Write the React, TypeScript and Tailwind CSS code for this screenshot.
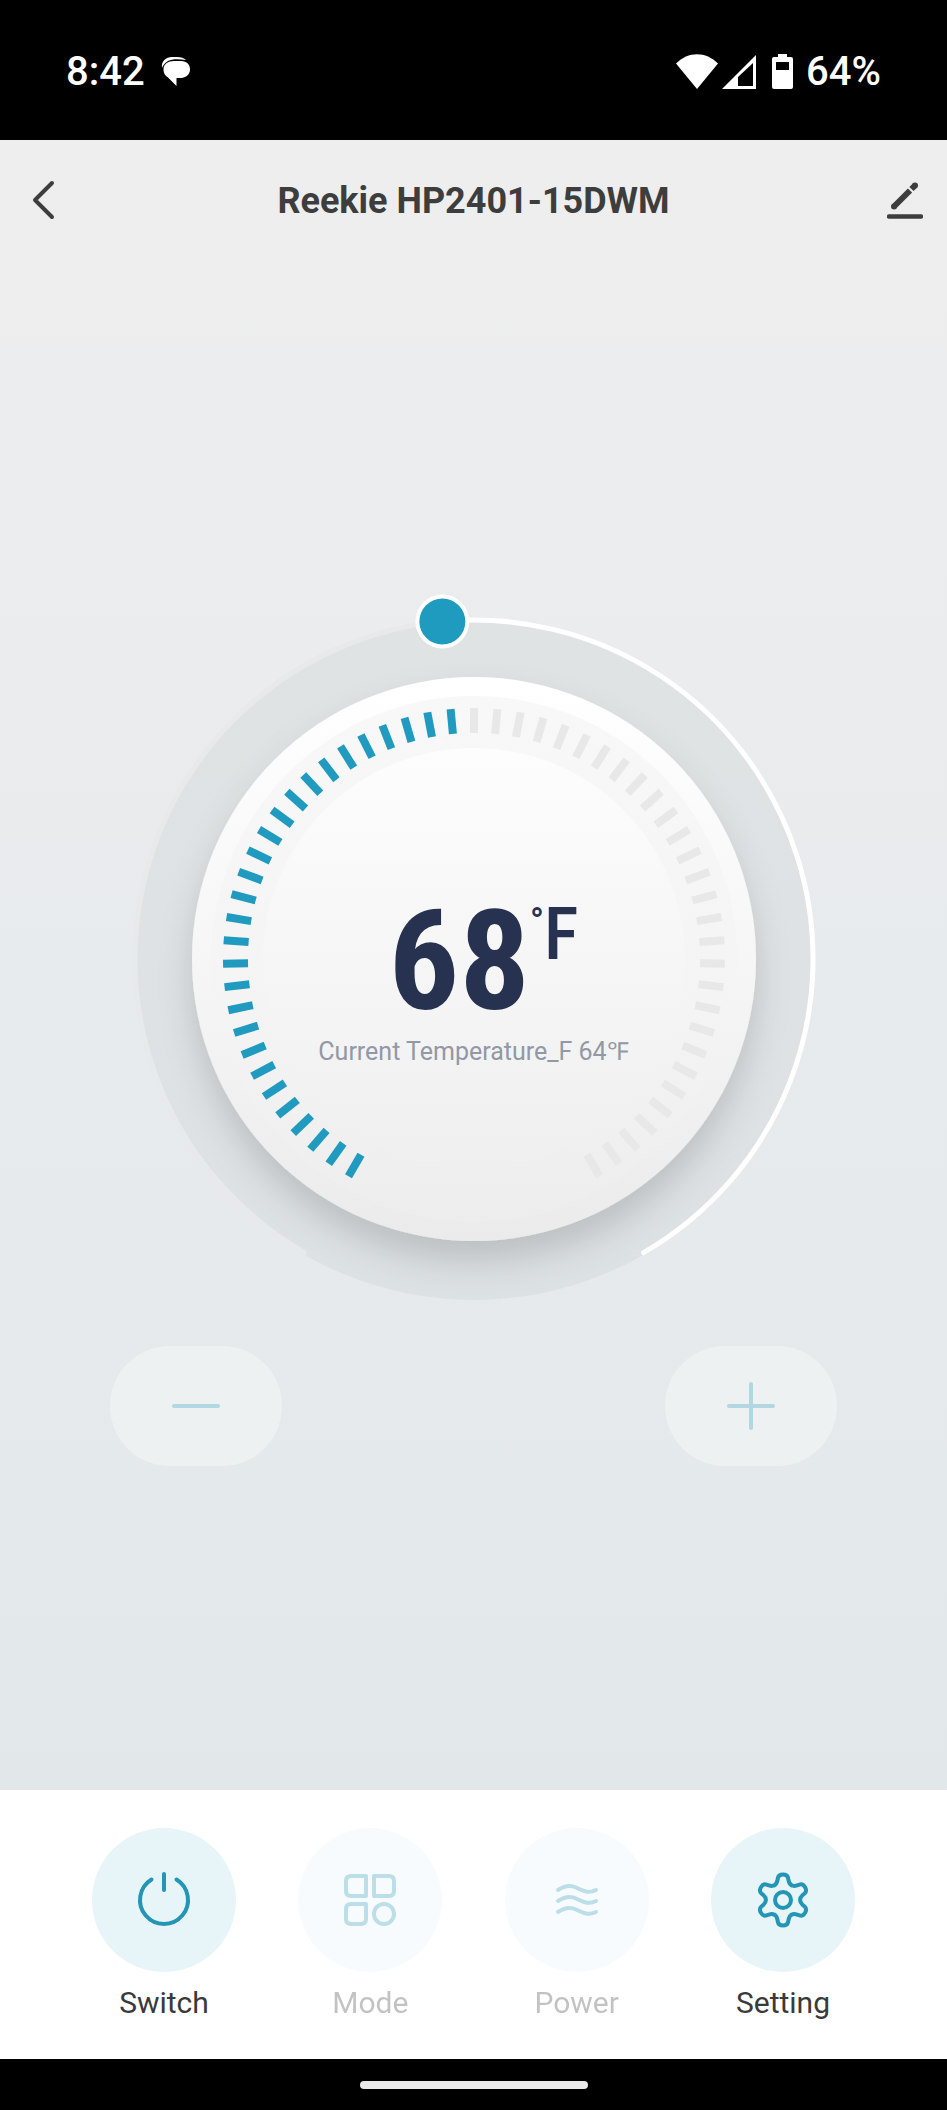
import React, { useState } from 'react';

const MIN_TEMP = 41;
const MAX_TEMP = 97;
const TICK_STEP = 300 / (MAX_TEMP - MIN_TEMP);

const ticks = Array.from({ length: MAX_TEMP - MIN_TEMP + 1 }, (_, i) => i);

// point on a circle around 0,0 - angle is clockwise from the top
const polar = (radius: number, angle: number) => {
  const rad = (angle * Math.PI) / 180;
  return [radius * Math.sin(rad), -radius * Math.cos(rad)];
};

const arc = (radius: number, from: number, to: number) => {
  const [x1, y1] = polar(radius, from);
  const [x2, y2] = polar(radius, to);
  const large = to - from > 180 ? 1 : 0;
  return `M${x1} ${y1}A${radius} ${radius} 0 ${large} 1 ${x2} ${y2}`;
};

// one tooth of the gear, the other five are the same points turned by 60 degrees
const tooth = [
  [-8.8, -14.6], [-6.3, -16], [-5.6, -19.5],
  [-5.1, -22], [-4.4, -25.5], [0, -25.5],
  [4.4, -25.5], [5.1, -22],
  [5.6, -19.5], [6.3, -16], [8.8, -14.6],
];

const gearPath = () => {
  let d = '';
  for (let i = 0; i < 6; i++) {
    const a = (i * Math.PI) / 3;
    const p = tooth.map(([x, y]) => `${x * Math.cos(a) - y * Math.sin(a)} ${x * Math.sin(a) + y * Math.cos(a)}`);
    d += `${i === 0 ? 'M' : 'L'}${p[0]}Q${p[1]} ${p[2]}L${p[3]}Q${p[4]} ${p[5]}Q${p[6]} ${p[7]}L${p[8]}Q${p[9]} ${p[10]}`;
  }
  return d + 'Z';
};

function StatusBar() {
  return (
    <div className="flex h-[140px] items-center justify-between bg-black px-[66px] pt-1 text-[40px] font-medium leading-[48px] text-white">
      <div className="flex items-center gap-4">
        <span>8:42</span>
        <svg width="30" height="30" viewBox="0 0 30 30" fill="#fff">
          <path d="M1 11C0 4 5 0 11 0h5c4 0 7 1 9 3-8-1-14-1-18 1C4 6 2 8 1 11Z" />
          <path d="M13 4h7c6 0 9 4 9 8.500s-4 8.500-9 8.500h-4.500v8L7 20.500C4 19 2.500 16 2.500 12.500 2.500 7 7 4 13 4Z" />
        </svg>
      </div>
      <div className="flex items-center gap-3">
        <svg width="118" height="36" viewBox="0 0 118 36" fill="#fff">
          <path d="M0 9.500C12-3 30-3 42 9.500L21 35Z" />
          <path fillRule="evenodd" d="M80 1v34H46L80 1ZM77 9 62 23v9h15V9Z" />
          <path fillRule="evenodd" d="M102 0h9v3h4q2 0 2 2v28q0 2-2 2H98q-2 0-2-2V5q0-2 2-2h4V0ZM100 8v8h13V8h-13Z" />
        </svg>
        <span>64%</span>
      </div>
    </div>
  );
}

function Header() {
  return (
    <header className="flex h-[122px] items-center justify-between px-6">
      <button type="button" aria-label="Back">
        <svg width="36" height="44" viewBox="0 0 36 44" fill="none" stroke="#3d3d3d" strokeWidth="4" strokeLinecap="round" strokeLinejoin="round">
          <path d="M28 4 11 21l17 17" />
        </svg>
      </button>
      <h1 className="text-4xl font-bold text-[#3d3d3d]">Reekie HP2401-15DWM</h1>
      <button type="button" aria-label="Edit">
        <svg width="36" height="44" viewBox="0 0 36 44" fill="none" stroke="#3d3d3d" strokeWidth="6">
          <path d="M2 37.500h32" strokeWidth="4.500" strokeLinecap="round" />
          <path d="M7 27.500 23 11.500" />
          <circle cx="7" cy="27.500" r="3" fill="#3d3d3d" stroke="none" />
          <path d="M24.500 10 28 6.500" />
          <circle cx="28" cy="6.500" r="3" fill="#3d3d3d" stroke="none" />
        </svg>
      </button>
    </header>
  );
}

function Dial({ temp }: { temp: number }) {
  const angle = -150 + (temp - MIN_TEMP) * TICK_STEP;
  const [thumbX, thumbY] = polar(339, angle);

  return (
    <svg className="col-start-1 row-start-1 w-[720px] overflow-visible" viewBox="-360 -360 720 720" fill="none">
      <defs>
        <linearGradient id="face" x1="0" y1="0" x2="0" y2="1">
          <stop offset="0" stopColor="#ffffff" />
          <stop offset="0.5" stopColor="#f6f6f6" />
          <stop offset="1" stopColor="#ebebeb" />
        </linearGradient>
        <linearGradient id="band" x1="0" y1="0" x2="0" y2="1">
          <stop offset="0" stopColor="#f8f8f8" />
          <stop offset="0.6" stopColor="#f4f4f4" />
          <stop offset="1" stopColor="#ededed" />
        </linearGradient>
        <linearGradient id="center" x1="0" y1="0" x2="0" y2="1">
          <stop offset="0" stopColor="#fdfdfd" />
          <stop offset="1" stopColor="#efefef" />
        </linearGradient>
        <linearGradient id="disc" x1="0" y1="0" x2="0" y2="1">
          <stop offset="0" stopColor="#e0e3e4" />
          <stop offset="1" stopColor="#dce1e3" />
        </linearGradient>
        <filter id="shadow" x="-20%" y="-20%" width="140%" height="150%">
          <feDropShadow dx="0" dy="20" stdDeviation="17" floodColor="#000000" floodOpacity="0.15" />
        </filter>
      </defs>

      <circle r="341" fill="url(#disc)" />
      <path d={arc(339, -150, angle)} stroke="#e7e9ea" strokeWidth="5" strokeLinecap="round" />
      <path d={arc(339, angle, 150)} stroke="#ffffff" strokeWidth="5" strokeLinecap="round" />

      <circle r="282" fill="url(#face)" filter="url(#shadow)" />
      <circle r="263" fill="url(#band)" />
      <circle r="211" fill="url(#center)" />

      {ticks.map((i) => (
        <rect
          key={i}
          x="-4"
          y="-251"
          width="8"
          height="25"
          transform={`rotate(${-150 + i * TICK_STEP})`}
          fill={i <= temp - MIN_TEMP ? '#209bbf' : '#e8e8e8'}
        />
      ))}

      <circle cx={thumbX} cy={thumbY} r="27" fill="#ffffff" />
      <circle cx={thumbX} cy={thumbY} r="23" fill="#1f9bc0" />
    </svg>
  );
}

interface NavButtonProps {
  label: string;
  disabled?: boolean;
  children: React.ReactNode;
}

function NavButton({ label, disabled, children }: NavButtonProps) {
  return (
    <button type="button" disabled={disabled} className="flex w-36 flex-col items-center gap-[13px] text-[#3a3a3a] disabled:opacity-30">
      <span className="flex size-36 items-center justify-center rounded-full bg-[#e7f5f9]">
        <svg width="60" height="60" viewBox="-30 -30 60 60" fill="none" stroke="#2595b5" strokeWidth="4" strokeLinecap="round" strokeLinejoin="round">
          {children}
        </svg>
      </span>
      <span className="text-3xl leading-9">{label}</span>
    </button>
  );
}

export default function App() {
  const [temp, setTemp] = useState(68);
  const locked = true;

  return (
    <div className="flex min-h-screen flex-col bg-black font-['Roboto',sans-serif]">
      <StatusBar />

      <main className="flex flex-1 flex-col bg-linear-to-b from-[#eeeeee] via-[#e8ebed] to-[#e2e8ea]">
        <Header />

        <section className="flex flex-1 flex-col justify-center gap-[27px] pt-3">
          <div className="grid place-items-center">
            <Dial temp={temp} />
            <div className="col-start-1 row-start-1 flex flex-col items-center gap-5 pt-[60px]">
              <div className="flex items-start pl-5 font-['Roboto_Condensed','Roboto',sans-serif] text-[#273250]">
                <span className="text-[140px] font-bold leading-[106px]">{temp}</span>
                <span className="text-4xl font-bold leading-[28px]">°</span>
                <span className="text-[72px] font-medium leading-[53px]">F</span>
              </div>
              <p className="text-[25px] leading-9 text-[#9298a5]">Current Temperature_F 64℉</p>
            </div>
            <input
              type="range"
              aria-label="Target temperature"
              className="sr-only"
              min={MIN_TEMP}
              max={MAX_TEMP}
              value={temp}
              onChange={(e) => setTemp(Number(e.target.value))}
            />
          </div>

          <div className="flex justify-between px-[110px]">
            <button
              type="button"
              aria-label="Decrease"
              disabled={locked}
              onClick={() => setTemp(Math.max(MIN_TEMP, temp - 1))}
              className="flex h-[120px] w-[172px] items-center justify-center rounded-[60px] bg-[#edf1f1]"
            >
              <svg width="52" height="52" viewBox="0 0 52 52" stroke="#b2d7e2" strokeWidth="4" strokeLinecap="round">
                <path d="M4 26h44" />
              </svg>
            </button>
            <button
              type="button"
              aria-label="Increase"
              disabled={locked}
              onClick={() => setTemp(Math.min(MAX_TEMP, temp + 1))}
              className="flex h-[120px] w-[172px] items-center justify-center rounded-[60px] bg-[#edf1f1]"
            >
              <svg width="52" height="52" viewBox="0 0 52 52" stroke="#b2d7e2" strokeWidth="4" strokeLinecap="round">
                <path d="M4 26h44M26 4v44" />
              </svg>
            </button>
          </div>
        </section>
      </main>

      <nav className="flex justify-between bg-white px-[92px] pt-[38px] pb-[38px]">
        <NavButton label="Switch">
          <path d="M-12.500 -20.500A24 24 0 1 0 12.500 -20.500" />
          <path d="M0 -26V-10" />
        </NavButton>
        <NavButton label="Mode" disabled>
          <path d="M-19 -24H-4V-4H-19Q-24 -4 -24 -9V-19Q-24 -24 -19 -24Z" />
          <path d="M4 -24H19Q24 -24 24 -19V-9Q24 -4 19 -4H4Z" />
          <path d="M-19 4H-4V19Q-4 24 -9 24H-19Q-24 24 -24 19V9Q-24 4 -19 4Z" />
          <circle cx="14" cy="14" r="10" />
        </NavButton>
        <NavButton label="Power" disabled>
          <path d="M-19 -10C-13 -14 -7 -15.500 -1 -12.500S11 -6 19 -10" />
          <path d="M-19 1C-13 -3 -7 -4.500 -1 -1.500S11 5 19 1" />
          <path d="M-19 12C-13 8 -7 6.500 -1 9.500S11 16 19 12" />
        </NavButton>
        <NavButton label="Setting">
          <path d={gearPath()} />
          <circle r="8" />
        </NavButton>
      </nav>

      <div className="flex h-[51px] items-center justify-center">
        <div className="h-2 w-[228px] rounded-full bg-[#ebebeb]" />
      </div>
    </div>
  );
}
